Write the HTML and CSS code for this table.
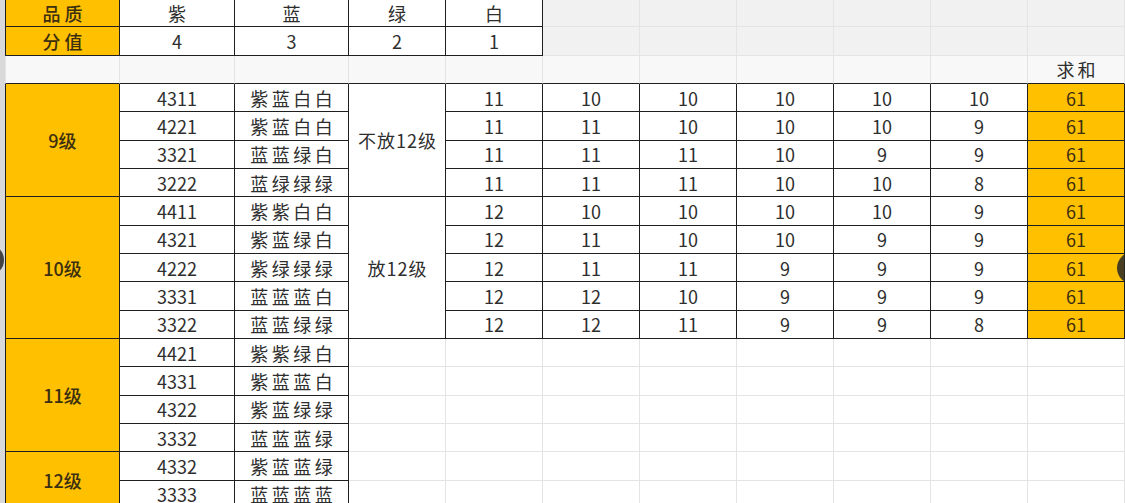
FILE: index.html
```html
<!DOCTYPE html>
<html lang="zh">
<head>
<meta charset="utf-8">
<title>分值表</title>
<link rel="stylesheet" href="styles.css">
</head>
<body>
<div class="page">
  <div class="strip"></div>
  <div class="sheet">
    <!-- row 1 -->
    <div class="c b o first lbl">品质</div>
    <div class="c b">紫</div>
    <div class="c b">蓝</div>
    <div class="c b">绿</div>
    <div class="c b">白</div>
    <div class="c g"></div><div class="c g"></div><div class="c g"></div><div class="c g"></div><div class="c g"></div><div class="c g"></div>
    <!-- row 2 -->
    <div class="c b o first lbl">分值</div>
    <div class="c b">4</div>
    <div class="c b">3</div>
    <div class="c b">2</div>
    <div class="c b">1</div>
    <div class="c g"></div><div class="c g"></div><div class="c g"></div><div class="c g"></div><div class="c g"></div><div class="c g"></div>
    <!-- row 3 -->
    <div class="c h firstl"></div><div class="c h"></div><div class="c h"></div><div class="c h"></div><div class="c h"></div><div class="c h"></div><div class="c h"></div><div class="c h"></div><div class="c h"></div><div class="c h"></div>
    <div class="c h sum">求和</div>
    <!-- row 4 -->
    <div class="c b o first lv span4">9级</div>
    <div class="c b">4311</div><div class="c b cn">紫蓝白白</div>
    <div class="c b span4 grp">不放12级</div>
    <div class="c b">11</div><div class="c b">10</div><div class="c b">10</div><div class="c b">10</div><div class="c b">10</div><div class="c b">10</div><div class="c b o">61</div>
    <!-- row 5 -->
    <div class="c b">4221</div><div class="c b cn">紫蓝白白</div>
    <div class="c b">11</div><div class="c b">11</div><div class="c b">10</div><div class="c b">10</div><div class="c b">10</div><div class="c b">9</div><div class="c b o">61</div>
    <!-- row 6 -->
    <div class="c b">3321</div><div class="c b cn">蓝蓝绿白</div>
    <div class="c b">11</div><div class="c b">11</div><div class="c b">11</div><div class="c b">10</div><div class="c b">9</div><div class="c b">9</div><div class="c b o">61</div>
    <!-- row 7 -->
    <div class="c b">3222</div><div class="c b cn">蓝绿绿绿</div>
    <div class="c b">11</div><div class="c b">11</div><div class="c b">11</div><div class="c b">10</div><div class="c b">10</div><div class="c b">8</div><div class="c b o">61</div>
    <!-- row 8 -->
    <div class="c b o first lv span5">10级</div>
    <div class="c b">4411</div><div class="c b cn">紫紫白白</div>
    <div class="c b span5 grp">放12级</div>
    <div class="c b">12</div><div class="c b">10</div><div class="c b">10</div><div class="c b">10</div><div class="c b">10</div><div class="c b">9</div><div class="c b o">61</div>
    <!-- row 9 -->
    <div class="c b">4321</div><div class="c b cn">紫蓝绿白</div>
    <div class="c b">12</div><div class="c b">11</div><div class="c b">10</div><div class="c b">10</div><div class="c b">9</div><div class="c b">9</div><div class="c b o">61</div>
    <!-- row 10 -->
    <div class="c b">4222</div><div class="c b cn">紫绿绿绿</div>
    <div class="c b">12</div><div class="c b">11</div><div class="c b">11</div><div class="c b">9</div><div class="c b">9</div><div class="c b">9</div><div class="c b o">61</div>
    <!-- row 11 -->
    <div class="c b">3331</div><div class="c b cn">蓝蓝蓝白</div>
    <div class="c b">12</div><div class="c b">12</div><div class="c b">10</div><div class="c b">9</div><div class="c b">9</div><div class="c b">9</div><div class="c b o">61</div>
    <!-- row 12 -->
    <div class="c b">3322</div><div class="c b cn">蓝蓝绿绿</div>
    <div class="c b">12</div><div class="c b">12</div><div class="c b">11</div><div class="c b">9</div><div class="c b">9</div><div class="c b">8</div><div class="c b o">61</div>
    <!-- row 13 -->
    <div class="c b o first lv span4">11级</div>
    <div class="c b">4421</div><div class="c b cn">紫紫绿白</div>
    <div class="c"></div><div class="c"></div><div class="c"></div><div class="c"></div><div class="c"></div><div class="c"></div><div class="c"></div><div class="c"></div>
    <!-- row 14 -->
    <div class="c b">4331</div><div class="c b cn">紫蓝蓝白</div>
    <div class="c"></div><div class="c"></div><div class="c"></div><div class="c"></div><div class="c"></div><div class="c"></div><div class="c"></div><div class="c"></div>
    <!-- row 15 -->
    <div class="c b">4322</div><div class="c b cn">紫蓝绿绿</div>
    <div class="c"></div><div class="c"></div><div class="c"></div><div class="c"></div><div class="c"></div><div class="c"></div><div class="c"></div><div class="c"></div>
    <!-- row 16 -->
    <div class="c b">3332</div><div class="c b cn">蓝蓝蓝绿</div>
    <div class="c"></div><div class="c"></div><div class="c"></div><div class="c"></div><div class="c"></div><div class="c"></div><div class="c"></div><div class="c"></div>
    <!-- row 17 -->
    <div class="c b o first lv span2">12级</div>
    <div class="c b">4332</div><div class="c b cn">紫蓝蓝绿</div>
    <div class="c"></div><div class="c"></div><div class="c"></div><div class="c"></div><div class="c"></div><div class="c"></div><div class="c"></div><div class="c"></div>
    <!-- row 18 -->
    <div class="c b">3333</div><div class="c b cn">蓝蓝蓝蓝</div>
    <div class="c"></div><div class="c"></div><div class="c"></div><div class="c"></div><div class="c"></div><div class="c"></div><div class="c"></div><div class="c"></div>
  </div>
  <div class="nav nav-left"></div>
  <div class="nav nav-right"></div>
</div>
</body>
</html>
```

FILE: styles.css
```css
* { box-sizing: border-box; }
html, body {
  margin: 0;
  padding: 0;
  width: 1125px;
  height: 503px;
  overflow: hidden;
  background: #ffffff;
}
.page {
  position: relative;
  display: flex;
  width: 1125px;
  height: 503px;
  overflow: hidden;
  font-family: "Noto Sans CJK SC", "Noto Sans", sans-serif;
  color: #2e2e2e;
  font-size: 18px;
}
.strip {
  width: 5px;
  flex: none;
  background: #d9d9d9;
}
.sheet {
  flex: none;
  display: grid;
  grid-template-columns: 115px 115px 114px repeat(8, 97px);
  grid-auto-rows: 28.33px;
  margin-top: -1px;
  height: 530px;
}
.c {
  display: flex;
  align-items: center;
  justify-content: center;
  border-right: 1px solid #e4e4e4;
  border-bottom: 1px solid #e4e4e4;
  background: #ffffff;
  white-space: nowrap;
  line-height: 1;
}
.c.b {
  border-right-color: #1f1f1f;
  border-bottom-color: #1f1f1f;
}
.c.first {
  border-left: 1px solid #1f1f1f;
}
.c.firstl {
  border-left: 1px solid #e4e4e4;
}
.c.g {
  background: #f1f1f1;
}
.c.h {
  background: #f8f8f8;
  border-bottom-color: #1f1f1f;
}
.c.o {
  background: #ffc000;
  color: #3b2f10;
}
.lbl {
  letter-spacing: 4px;
  padding-left: 4px;
  font-weight: 500;
}
.lv {
  font-weight: 500;
}
.cn {
  letter-spacing: 3.5px;
  padding-left: 3.5px;
}
.grp {
  letter-spacing: 1px;
  padding-left: 1px;
}
.sum {
  letter-spacing: 3px;
  padding-left: 3px;
  align-items: flex-end;
  padding-bottom: 5px;
}
.span2 { grid-row: span 2; }
.span4 { grid-row: span 4; }
.span5 { grid-row: span 5; }
.nav {
  position: absolute;
  width: 32px;
  height: 32px;
  border-radius: 50%;
  background: rgba(40, 40, 40, 0.85);
}
.nav-left {
  left: -28px;
  top: 244px;
}
.nav-right {
  right: -24px;
  top: 252px;
}
```
